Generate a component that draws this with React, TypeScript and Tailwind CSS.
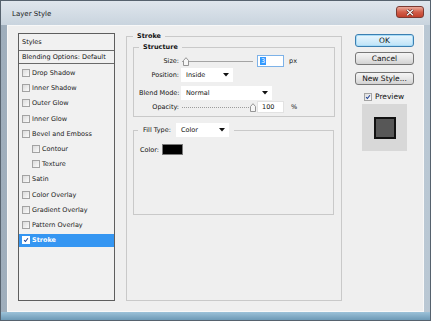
import React from "react";

const Check = ({ color = "#1c3f94" }: { color?: string }) => (
  <svg width="8" height="8" viewBox="0 0 8 8" className="block">
    <path d="M1.5 4.2 L3.2 6 L6.6 1.6" fill="none" stroke={color} strokeWidth="1.4" />
  </svg>
);

const Box = ({ checked = false, onBlue = false }: { checked?: boolean; onBlue?: boolean }) => (
  <div
    className={
      "w-[8px] h-[8px] shrink-0 border flex items-center justify-center " +
      (onBlue ? "border-[#ffffff] bg-[#ffffff]" : "border-[#a3a3a3] bg-gradient-to-br from-[#dcdcdc] to-[#fbfbfb]")
    }
  >
    {checked && <Check />}
  </div>
);

const Arrow = () => (
  <svg width="6" height="4" viewBox="0 0 6 4" className="block shrink-0">
    <path d="M0 0 H6 L3 3.5 Z" fill="#111" />
  </svg>
);

const Dropdown = ({ label, w }: { label: string; w: string }) => (
  <div className={"h-[14px] bg-white flex items-center justify-between pl-[5px] pr-[4px] " + w}>
    <span className="text-[6.5px] leading-[8px]">{label}</span>
    <Arrow />
  </div>
);

const Thumb = () => (
  <svg width="6" height="9" viewBox="0 0 6 9" className="block">
    <path d="M0.5 3.5 L3 0.7 L5.5 3.5 V8.5 H0.5 Z" fill="#f6f6f6" stroke="#8a8a8a" strokeWidth="0.9" />
  </svg>
);

const Slider = ({ pos, dotted }: { pos: string; dotted?: boolean }) => (
  <div className="relative w-[71px] h-[12px] ml-[3px] flex items-center">
    <div
      className={
        "w-full h-0 border-t " +
        (dotted ? "border-dotted border-[#9c9c9c]" : "border-solid border-[#a4a4a4]")
      }
    />
    <div className={"absolute top-[2px] " + pos}>
      <Thumb />
    </div>
  </div>
);

const listItems: { t: string; indent?: boolean }[] = [
  { t: "Drop Shadow" },
  { t: "Inner Shadow" },
  { t: "Outer Glow" },
  { t: "Inner Glow" },
  { t: "Bevel and Emboss" },
  { t: "Contour", indent: true },
  { t: "Texture", indent: true },
  { t: "Satin" },
  { t: "Color Overlay" },
  { t: "Gradient Overlay" },
  { t: "Pattern Overlay" },
];

export default function App() {
  return (
    <div className="w-[431px] h-[321px] overflow-hidden flex flex-col font-['DejaVu_Sans',sans-serif] text-[#111] bg-gradient-to-r from-[#9eadbb] via-[#cdd8e2] to-[#b9c7d3] border border-[#56626e]">
      {/* title bar */}
      <div className="h-[24px] shrink-0 flex items-start justify-between bg-gradient-to-b from-[#dfe6ed] to-[#c9d4de]">
        <span className="ml-[11px] mt-[8px] text-[7px] leading-[10px] text-[#202020]">Layer Style</span>
        <div className="mt-[5px] mr-[6px] w-[28px] h-[12px] rounded-[3px] border border-[#7b3a32] bg-gradient-to-b from-[#e9a99b] via-[#d25e4a] to-[#c2402c] flex items-center justify-center">
          <svg width="8" height="7" viewBox="0 0 8 7" className="block">
            <path d="M1 0.8 L7 6.2 M7 0.8 L1 6.2" stroke="#4a1a14" strokeWidth="2.4" />
            <path d="M1 0.8 L7 6.2 M7 0.8 L1 6.2" stroke="#ffffff" strokeWidth="1.3" />
          </svg>
        </div>
      </div>

      {/* client area */}
      <div className="mx-[6px] h-[287px] shrink-0 bg-[#efefef] border border-[#f8f8f8] flex items-start">
        {/* styles list */}
        <div className="ml-[10px] mt-[7px] w-[97px] h-[268px] border border-[#5e5e5e] bg-[#f1f1f1] flex flex-col">
          <div className="h-[17px] shrink-0 border-b border-[#6a6a6a] flex items-center pl-[3px] text-[6.5px] leading-[8px]">
            Styles
          </div>
          <div className="h-[13px] shrink-0 border-b border-[#6a6a6a] flex items-center pl-[3px] text-[6.5px] leading-[8px]">
            Blending Options: Default
          </div>
          <div className="pt-[1.5px] flex flex-col">
            {listItems.map((it) => (
              <div
                key={it.t}
                className={
                  "h-[15.2px] flex items-center gap-[2px] text-[6.5px] leading-[8px] text-[#222] " +
                  (it.indent ? "pl-[13px]" : "pl-[3px]")
                }
              >
                <Box />
                <span>{it.t}</span>
              </div>
            ))}
            <div className="h-[15.2px] flex items-center">
              <div className="w-full h-[13px] bg-[#3596f2] flex items-center gap-[2px] pl-[3px] text-[6.5px] leading-[8px] font-bold text-white">
                <Box checked onBlue />
                <span>Stroke</span>
              </div>
            </div>
          </div>
        </div>

        {/* main panel */}
        <fieldset className="ml-[11px] mt-[5px] w-[215px] h-[270px] border border-[#c9c9c9] px-[6px]">
          <legend className="px-[4px] font-bold text-[6.5px] leading-[10px]">Stroke</legend>

          <fieldset className="mt-[1px] w-[202px] border border-[#c9c9c9] pl-[5px] pb-[3px]">
            <legend className="px-[4px] font-bold text-[6.5px] leading-[10px]">Structure</legend>

            <div className="mt-[3px] h-[12px] flex items-center text-[6.5px] leading-[8px]">
              <span className="w-[40px] text-right">Size:</span>
              <Slider pos="left-[1px]" />
              <div className="ml-[4px] w-[27px] h-[12px] bg-white border border-[#7db2e8] flex items-center pl-[2px]">
                <span className="bg-[#3399ff] text-white px-[1px] leading-[8px]">3</span>
              </div>
              <span className="ml-[5px]">px</span>
            </div>

            <div className="mt-[1px] h-[14px] flex items-center text-[6.5px] leading-[8px]">
              <span className="w-[40px] text-right">Position:</span>
              <div className="ml-[2px]">
                <Dropdown label="Inside" w="w-[52px]" />
              </div>
            </div>

            <div className="mt-[4px] h-[14px] flex items-center text-[6.5px] leading-[8px]">
              <span className="w-[40px] text-right whitespace-nowrap">Blend Mode:</span>
              <div className="ml-[2px]">
                <Dropdown label="Normal" w="w-[91px]" />
              </div>
            </div>

            <div className="mt-[1px] h-[12px] flex items-center text-[6.5px] leading-[8px]">
              <span className="w-[40px] text-right">Opacity:</span>
              <Slider pos="left-[68px]" dotted />
              <div className="ml-[4px] w-[27px] h-[12px] bg-white border border-[#e2e2e2] flex items-center pl-[4px]">
                <span>100</span>
              </div>
              <span className="ml-[7px]">%</span>
            </div>
          </fieldset>

          <fieldset className="mt-[6px] w-[201px] h-[92px] border border-[#c9c9c9] pl-[4px]">
            <legend className="px-[5px] flex items-center text-[6.5px] leading-[8px]">
              <span className="w-[31px] whitespace-nowrap">Fill Type:</span>
              <div className="ml-[2px]">
                <Dropdown label="Color" w="w-[53px]" />
              </div>
            </legend>
            <div className="mt-[7px] h-[11px] flex items-center pl-[2px] text-[6.5px] leading-[8px]">
              <span className="w-[20px]">Color:</span>
              <div className="ml-[2px] w-[21px] h-[11px] bg-black border border-[#7a7a7a]" />
            </div>
          </fieldset>
        </fieldset>

        {/* buttons */}
        <div className="ml-[13px] w-[59px] flex flex-col">
          <div className="mt-[8px] h-[13px] rounded-[3px] border border-[#3c7fb1] bg-gradient-to-b from-[#eaf6fd] to-[#bde3f8] flex items-center justify-center text-[7.5px] leading-[9px] shadow-[inset_0_0_0_1px_#a8dcf7]">
            OK
          </div>
          <div className="mt-[5px] h-[13px] rounded-[3px] border border-[#777] bg-gradient-to-b from-[#f4f4f4] via-[#e6e6e6] to-[#d2d2d2] flex items-center justify-center text-[7.5px] leading-[9px]">
            Cancel
          </div>
          <div className="mt-[7px] h-[13px] rounded-[3px] border border-[#777] bg-gradient-to-b from-[#f4f4f4] via-[#e6e6e6] to-[#d2d2d2] flex items-center justify-center text-[7.5px] leading-[9px]">
            New Style...
          </div>
          <div className="mt-[7px] h-[9px] ml-[9px] flex items-center gap-[3px] text-[7.5px] leading-[9px]">
            <Box checked />
            <span>Preview</span>
          </div>
          <div className="mt-[3px] ml-[7px] w-[45px] h-[47px] bg-[#d8d8d8] flex items-center justify-center">
            <div className="w-[22px] h-[22px] bg-[#575757] border-2 border-[#111]" />
          </div>
        </div>
      </div>

      {/* bottom frame */}
      <div className="flex-1 bg-gradient-to-b from-[#9cc2d9] to-[#6e9ab6]" />
    </div>
  );
}
